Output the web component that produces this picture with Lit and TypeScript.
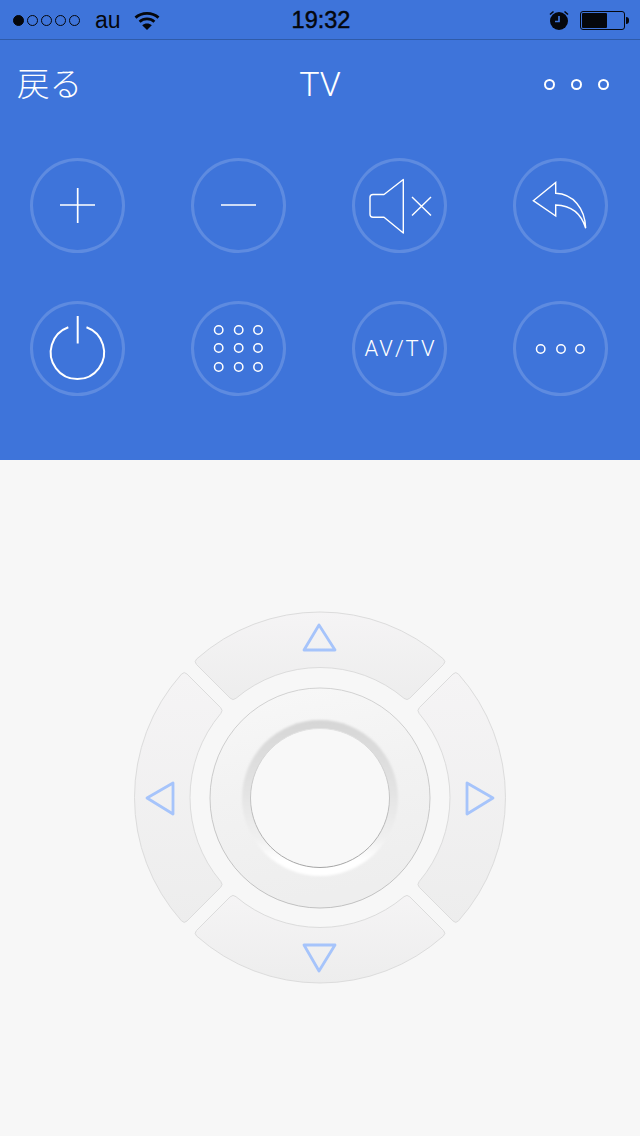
import { LitElement, html, css, svg } from "lit";
import { customElement } from "lit/decorators.js";

const R_OUT = 185.5, R_IN = 130, OFF = 9.5, CR = 4;

function rot(p: number[], deg: number) {
  const a = (deg * Math.PI) / 180;
  return [p[0] * Math.cos(a) - p[1] * Math.sin(a), p[0] * Math.sin(a) + p[1] * Math.cos(a)];
}
function hit(r: number, sign: number) {
  // point at radius r on a gap line of the top segment
  const u = Math.sqrt((r * r - 2 * (OFF / 2) ** 2) / 2);
  return [sign * (u - OFF / 2), -u - OFF / 2];
}
function segment(deg: number) {
  const oL = hit(R_OUT, -1), oR = hit(R_OUT, 1), iL = hit(R_IN, -1), iR = hit(R_IN, 1);
  const along = (a: number[], b: number[], d: number) => {
    const l = Math.hypot(b[0] - a[0], b[1] - a[1]);
    return [a[0] + ((b[0] - a[0]) * d) / l, a[1] + ((b[1] - a[1]) * d) / l];
  };
  const towardsArc = (p: number[], r: number, dir: number) => {
    const a = Math.atan2(p[1], p[0]) + (dir * CR) / r;
    return [r * Math.cos(a), r * Math.sin(a)];
  };
  const pts = {
    a: towardsArc(oL, R_OUT, 1), b: towardsArc(oR, R_OUT, -1),
    c: along(oR, iR, CR), d: along(iR, oR, CR),
    e: towardsArc(iR, R_IN, -1), f: towardsArc(iL, R_IN, 1),
    g: along(iL, oL, CR), h: along(oL, iL, CR),
  };
  const f = (p: number[]) => rot(p, deg).map((n) => n.toFixed(2)).join(" ");
  return `M${f(pts.a)} A${R_OUT} ${R_OUT} 0 0 1 ${f(pts.b)} Q${f(oR)} ${f(pts.c)} L${f(pts.d)} Q${f(iR)} ${f(pts.e)} A${R_IN} ${R_IN} 0 0 0 ${f(pts.f)} Q${f(iL)} ${f(pts.g)} L${f(pts.h)} Q${f(oL)} ${f(pts.a)} Z`;
}

const dot3 = (xs: number[], y: number) =>
  xs.map((x) => svg`<circle cx=${x} cy=${y} r="4.2" />`);

const ICONS: Record<string, unknown> = {
  plus: svg`<path d="M30 47H65M47.7 30V65" />`,
  minus: svg`<path d="M30 47H65" />`,
  mute: svg`<path stroke-width="1.4" stroke-linejoin="round" d="M51.3 21.5L32 36.5H21Q18 36.5 18 39.5V56.3Q18 59.3 21 59.3H32L51.3 75Z" /><path stroke-width="1.4" d="M60 39L79 57.5M79 39L60 57.5" />`,
  back: svg`<path stroke-width="1.4" stroke-linejoin="miter" d="M20.3 42.7L42.7 24.5V35.3C60 36 72 50 72.7 70.3C69 58 60 47.5 42.7 47V58Z" />`,
  power: svg`<path stroke-width="2" d="M47.7 15V42.5" /><path stroke-width="2" d="M38.3 26.3A26.7 26.7 0 1 0 56.5 26.3" />`,
  grid: svg`${[29, 47, 66].map((y) => dot3([27.7, 47.7, 67], y))}`,
  more: svg`${dot3([27.7, 48, 67], 48)}`,
};

@customElement("app-root")
export class AppRoot extends LitElement {
  static styles = css`
    :host {
      display: block;
      width: 640px;
      height: 1136px;
      overflow: hidden;
      font-family: "Liberation Sans", "Noto Sans CJK JP", sans-serif;
      background: #f7f7f7;
    }
    .top {
      background: #3e74da;
      height: 460px;
      box-sizing: border-box;
    }
    .status {
      height: 40px;
      box-sizing: border-box;
      border-bottom: 1px solid #2f5ba9;
      display: grid;
      grid-template-columns: 1fr auto 1fr;
      align-items: center;
      padding: 0 11px 0 13px;
      color: #05070c;
    }
    .st-left, .st-right {
      display: flex;
      align-items: center;
    }
    .st-right { justify-content: flex-end; }
    .signal { display: flex; gap: 3px; }
    .signal i {
      width: 11px;
      height: 11px;
      box-sizing: border-box;
      border: 1px solid #05070c;
      border-radius: 50%;
    }
    .signal i.on { background: #05070c; }
    .carrier {
      font-size: 23px;
      margin-left: 15px;
      margin-right: 13px;
      line-height: 40px;
    }
    .wifi { display: block; }
    .time {
      font-size: 23.5px;
      line-height: 40px;
      -webkit-text-stroke: 0.5px #05070c;
    }
    .alarm { display: block; margin-right: 11px; }
    .battery {
      position: relative;
      width: 45px;
      height: 19px;
      box-sizing: border-box;
      border: 1px solid #05070c;
      border-radius: 3px;
      padding: 1px;
      margin-right: 4px;
    }
    .battery b {
      display: block;
      width: 25px;
      height: 15px;
      border-radius: 1px;
      background: #05070c;
    }
    .battery::after {
      content: "";
      position: absolute;
      right: -5px;
      top: 5px;
      width: 3px;
      height: 7px;
      background: #05070c;
      border-radius: 0 3px 3px 0;
    }
    .nav {
      height: 88px;
      display: grid;
      grid-template-columns: 1fr auto 1fr;
      align-items: center;
      padding: 0 31px 0 17px;
      color: #fff;
    }
    .back {
      font-family: "Noto Sans CJK JP", sans-serif;
      font-weight: 300;
      font-size: 32.5px;
      padding-bottom: 5px;
    }
    .title {
      font-family: Roboto, sans-serif;
      font-weight: 300;
      font-size: 34px;
      margin-left: 14px;
    }
    .nav-dots {
      display: flex;
      justify-content: flex-end;
      gap: 16px;
    }
    .nav-dots i {
      width: 11px;
      height: 11px;
      box-sizing: border-box;
      border: 2px solid #fff;
      border-radius: 50%;
    }
    .grid {
      display: grid;
      grid-template-columns: repeat(4, 95px);
      column-gap: 66px;
      row-gap: 48px;
      padding: 30px 0 0 30px;
    }
    .btn {
      width: 95px;
      height: 95px;
      border-radius: 50%;
      box-shadow: inset 0 0 0 3px rgba(255, 255, 255, 0.17);
      display: flex;
      align-items: center;
      justify-content: center;
      color: #fff;
    }
    .btn svg {
      width: 95px;
      height: 95px;
      fill: none;
      stroke: #fff;
      stroke-width: 1.7;
    }
    .btn svg circle { stroke-width: 1.5; }
    .avtv {
      font-family: Roboto, sans-serif;
      font-weight: 300;
      font-size: 22px;
      letter-spacing: 2px;
      margin-left: 2px;
    }
    .pad-area {
      height: 676px;
      display: flex;
      align-items: center;
      justify-content: center;
    }
    .pad { display: block; }
  `;

  render() {
    const buttons = ["plus", "minus", "mute", "back", "power", "grid", "avtv", "more"];
    return html`
      <div class="top">
        <div class="status">
          <div class="st-left">
            <div class="signal"><i class="on"></i><i></i><i></i><i></i><i></i></div>
            <span class="carrier">au</span>
            <svg class="wifi" width="26" height="19" viewBox="0 0 26 19" fill="none" stroke="#05070c" stroke-width="2.8">
              <path d="M1.5 6.6C7.8 .9 18.2 .9 24.5 6.6" />
              <path d="M5.6 10.8C9.8 7 16.2 7 20.4 10.8" />
              <path fill="#05070c" stroke="none" d="M8.2 14.2C10.8 11.9 15.2 11.9 17.8 14.2L13 19Z" />
            </svg>
          </div>
          <div class="time">19:32</div>
          <div class="st-right">
            <svg class="alarm" width="20" height="20" viewBox="0 0 20 20">
              <circle cx="10" cy="11" r="9" fill="#05070c" />
              <path d="M1 4.5L4.5 1.5M19 4.5L15.5 1.5" stroke="#05070c" stroke-width="1.6" fill="none" />
              <path d="M10 6V11.5H6" stroke="#3e74da" stroke-width="1.7" fill="none" />
            </svg>
            <div class="battery"><b></b></div>
          </div>
        </div>
        <div class="nav">
          <div class="back">戻る</div>
          <div class="title">TV</div>
          <div class="nav-dots"><i></i><i></i><i></i></div>
        </div>
        <div class="grid">
          ${buttons.map((b) =>
            b === "avtv"
              ? html`<div class="btn"><span class="avtv">AV/TV</span></div>`
              : html`<div class="btn"><svg viewBox="0 0 95 95">${ICONS[b]}</svg></div>`
          )}
        </div>
      </div>
      <div class="pad-area">
        <svg class="pad" width="400" height="400" viewBox="-200 -200 400 400">
          <defs>
            <linearGradient id="seg" x1="0" y1="0" x2="0" y2="1">
              <stop offset="0" stop-color="#f5f4f5" />
              <stop offset="1" stop-color="#ededed" />
            </linearGradient>
            <linearGradient id="ring" x1="0" y1="0" x2="0.2" y2="1">
              <stop offset="0" stop-color="#f8f8f8" />
              <stop offset="0.5" stop-color="#f2f2f2" />
              <stop offset="1" stop-color="#eeeeee" />
            </linearGradient>
            <linearGradient id="ringLine" x1="0" y1="0" x2="0" y2="1">
              <stop offset="0" stop-color="#d2d2d2" />
              <stop offset="1" stop-color="#c0c0c0" />
            </linearGradient>
            <linearGradient id="well" x1="0" y1="0" x2="0" y2="1">
              <stop offset="0" stop-color="#d6d6d6" />
              <stop offset="0.45" stop-color="#e3e3e3" />
              <stop offset="0.76" stop-color="#f0f0f0" />
              <stop offset="0.9" stop-color="#ffffff" />
              <stop offset="1" stop-color="#ffffff" />
            </linearGradient>
            <linearGradient id="faceLine" x1="0" y1="0" x2="0" y2="1">
              <stop offset="0" stop-color="#e2e2e2" />
              <stop offset="0.5" stop-color="#c4c4c4" />
              <stop offset="1" stop-color="#a4a4a4" />
            </linearGradient>
            <filter id="soft" x="-20%" y="-20%" width="140%" height="140%">
              <feGaussianBlur stdDeviation="0.9" />
            </filter>
          </defs>
          <g transform="translate(0 -0.5)" fill="url(#seg)" stroke="#dcdcdc" stroke-width="1">
            ${[0, 90, 180, 270].map((d) => svg`<path d=${segment(d)} />`)}
          </g>
          <circle r="110" fill="url(#ring)" stroke="url(#ringLine)" stroke-width="1" />
          <circle r="78" fill="url(#well)" filter="url(#soft)" />
          <circle r="69.5" fill="#f8f8f8" stroke="url(#faceLine)" stroke-width="1" />
          <g fill="none" stroke="#a6c4fb" stroke-width="2.8" stroke-linejoin="round">
            <path d="M-1 -173L-16 -148H15Z" />
            <path d="M-1 173L-16 147H15Z" />
            <path d="M-173 0L-147 -15V16Z" />
            <path d="M173 0L147 -15V16Z" />
          </g>
        </svg>
      </div>
    `;
  }
}
